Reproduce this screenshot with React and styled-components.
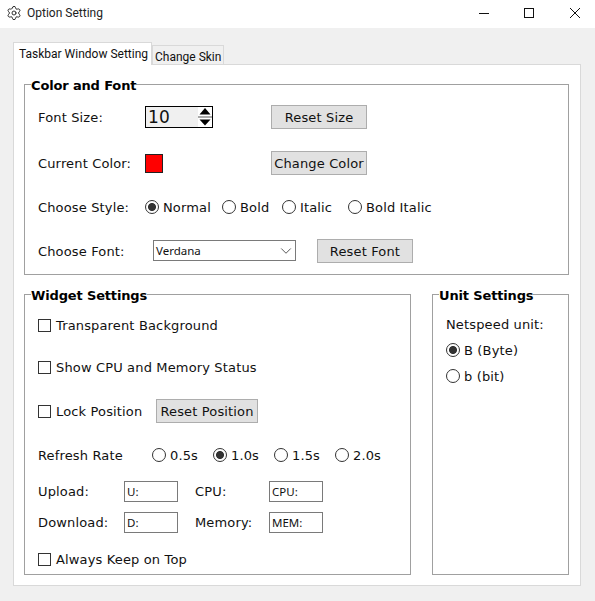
import React from "react";
import styled, { createGlobalStyle } from "styled-components";
import { Settings, ChevronDown } from "lucide-react";

const GlobalStyle = createGlobalStyle`
  html, body {
    margin: 0;
    padding: 0;
    background: #f0f0f0;
  }
  * {
    box-sizing: border-box;
  }
`;

export default function App() {
  return (
    <>
      <GlobalStyle />
      <Window>
        <TitleBar>
          <Settings size={16} strokeWidth={1.4} color="#222" />
          <TitleText>Option Setting</TitleText>
          <WindowControls>
            <svg width="10" height="10" viewBox="0 0 10 10">
              <path d="M0 5.5H10" stroke="#111" strokeWidth="1" />
            </svg>
            <svg width="10" height="10" viewBox="0 0 10 10">
              <rect x="0.5" y="0.5" width="9" height="9" fill="none" stroke="#111" />
            </svg>
            <svg width="10" height="10" viewBox="0 0 10 10">
              <path d="M0 0L10 10M10 0L0 10" stroke="#111" strokeWidth="1" />
            </svg>
          </WindowControls>
        </TitleBar>
        <Content>
          <Tabs>
            <Tab $active>Taskbar Window Setting</Tab>
            <Tab>Change Skin</Tab>
          </Tabs>
          <Pane>
            <Frame>
              <Legend>Color and Font</Legend>
              <Row $top={13}>
                <Label $w={107}>Font Size:</Label>
                <Spinner>
                  <SpinValue>10</SpinValue>
                  <SpinArrows>
                    <svg width="14" height="20" viewBox="0 0 14 20">
                      <path d="M7 1L12.5 7.5H1.5Z" fill="#000" />
                      <rect x="0" y="9.5" width="14" height="1" fill="#555" />
                      <path d="M7 18.5L12.5 12.5H1.5Z" fill="#000" />
                    </svg>
                  </SpinArrows>
                </Spinner>
                <Button $w={96} $left={58}>Reset Size</Button>
              </Row>
              <Row $top={22}>
                <Label $w={107}>Current Color:</Label>
                <Swatch />
                <Button $w={96} $left={108}>Change Color</Button>
              </Row>
              <Row $top={20}>
                <Label $w={107}>Choose Style:</Label>
                <Choice $w={77}><Radio name="style" defaultChecked />Normal</Choice>
                <Choice $w={60}><Radio name="style" />Bold</Choice>
                <Choice $w={66}><Radio name="style" />Italic</Choice>
                <Choice><Radio name="style" />Bold Italic</Choice>
              </Row>
              <Row $top={20}>
                <Label $w={115}>Choose Font:</Label>
                <SelectBox>
                  Verdana
                  <ChevronDown size={18} strokeWidth={1} color="#222" />
                </SelectBox>
                <Button $w={96} $left={21}>Reset Font</Button>
              </Row>
            </Frame>
            <BottomRow>
              <Frame $w={387} $h={289}>
                <Legend>Widget Settings</Legend>
                <Row $top={11}>
                  <Choice><Check />Transparent Background</Choice>
                </Row>
                <Row $top={18}>
                  <Choice><Check />Show CPU and Memory Status</Choice>
                </Row>
                <Row $top={20}>
                  <Choice $w={118}><Check />Lock Position</Choice>
                  <Button $w={102}>Reset Position</Button>
                </Row>
                <Row $top={20}>
                  <Label $w={114}>Refresh Rate</Label>
                  <Choice $w={61}><Radio name="rate" />0.5s</Choice>
                  <Choice $w={61}><Radio name="rate" defaultChecked />1.0s</Choice>
                  <Choice $w={61}><Radio name="rate" />1.5s</Choice>
                  <Choice><Radio name="rate" />2.0s</Choice>
                </Row>
                <Row $top={12}>
                  <Label $w={86}>Upload:</Label>
                  <TextBox defaultValue="U:" />
                  <Label $w={74} $left={17}>CPU:</Label>
                  <TextBox defaultValue="CPU:" />
                </Row>
                <Row $top={7}>
                  <Label $w={86}>Download:</Label>
                  <TextBox defaultValue="D:" />
                  <Label $w={74} $left={17}>Memory:</Label>
                  <TextBox defaultValue="MEM:" />
                </Row>
                <Row $top={13}>
                  <Choice><Check />Always Keep on Top</Choice>
                </Row>
              </Frame>
              <Frame $w={137} $h={289}>
                <Legend>Unit Settings</Legend>
                <Row $top={12} $h={20}>
                  <Label>Netspeed unit:</Label>
                </Row>
                <Row $top={6} $h={20}>
                  <Choice><Radio name="unit" defaultChecked />B (Byte)</Choice>
                </Row>
                <Row $top={6} $h={20}>
                  <Choice><Radio name="unit" />b (bit)</Choice>
                </Row>
              </Frame>
            </BottomRow>
          </Pane>
        </Content>
      </Window>
    </>
  );
}

const Window = styled.div`
  width: 595px;
  height: 601px;
  overflow: hidden;
  background: #f0f0f0;
  font-family: "DejaVu Sans", Verdana, sans-serif;
  font-size: 13px;
  letter-spacing: 0.15px;
  color: #111;
`;

const TitleBar = styled.div`
  height: 28px;
  background: #fff;
  display: flex;
  align-items: center;
  padding: 0 15px 3px 6px;
`;

const TitleText = styled.span`
  margin-left: 5px;
  font-family: Roboto, "Noto Sans", sans-serif;
  font-size: 12px;
  letter-spacing: 0;
  color: #222;
`;

const WindowControls = styled.div`
  margin-left: auto;
  display: flex;
  gap: 35px;
  align-items: center;

  svg:last-child {
    margin-left: 1px;
  }
`;

const Content = styled.div`
  padding: 15px 14px 0 13px;
`;

const Tabs = styled.div`
  display: flex;
  align-items: flex-end;
  height: 22px;
  position: relative;
  z-index: 1;
  margin-bottom: -1px;
`;

const Tab = styled.div`
  height: ${(p) => (p.$active ? "23px" : "20px")};
  width: ${(p) => (p.$active ? "139px" : "72px")};
  padding: ${(p) => (p.$active ? "0 0 1px 5px" : "3px 0 0 2px")};
  display: flex;
  align-items: center;
  background: ${(p) => (p.$active ? "#fff" : "#f0f0f0")};
  border: 1px solid #d9d9d9;
  border-bottom: ${(p) => (p.$active ? "none" : "1px solid #d9d9d9")};
  font-family: Roboto, "Noto Sans", sans-serif;
  font-size: 12px;
  letter-spacing: 0;
  white-space: nowrap;
`;

const Pane = styled.div`
  width: 568px;
  height: 522px;
  background: #fff;
  border: 1px solid #d9d9d9;
  padding: 11px 11px 0 10px;
`;

const Frame = styled.fieldset`
  margin: 0;
  padding: 0 12px 0 13px;
  min-width: 0;
  width: ${(p) => (p.$w ? `${p.$w}px` : "545px")};
  height: ${(p) => (p.$h ? `${p.$h}px` : "199px")};
  border: 1px solid #a0a0a0;
`;

const Legend = styled.legend`
  position: relative;
  top: 2px;
  margin-left: -7px;
  padding: 0;
  font-weight: 700;
  line-height: 16px;
  letter-spacing: -0.15px;
  color: #000;
`;

const BottomRow = styled.div`
  display: flex;
  gap: 21px;
  margin-top: 11px;
`;

const Row = styled.div`
  display: flex;
  align-items: center;
  height: ${(p) => p.$h || 24}px;
  margin-top: ${(p) => p.$top || 0}px;
`;

const Label = styled.span`
  flex: none;
  width: ${(p) => (p.$w ? `${p.$w}px` : "auto")};
  margin-left: ${(p) => p.$left || 0}px;
  white-space: nowrap;
`;

const Choice = styled.label`
  flex: none;
  width: ${(p) => (p.$w ? `${p.$w}px` : "auto")};
  display: flex;
  align-items: center;
  gap: 4px;
  white-space: nowrap;
`;

const Button = styled.button`
  flex: none;
  width: ${(p) => p.$w}px;
  height: 24px;
  margin-left: ${(p) => p.$left || 0}px;
  padding: 0;
  background: #e1e1e1;
  border: 1px solid #adadad;
  border-radius: 0;
  font: inherit;
  letter-spacing: inherit;
  color: #111;
`;

const Spinner = styled.div`
  flex: none;
  width: 68px;
  height: 22px;
  display: flex;
  align-items: center;
  justify-content: space-between;
  background: #f0f0f0;
  border: 1px solid #000;
`;

const SpinValue = styled.span`
  padding-left: 2px;
  font-size: 17px;
  color: #111;
`;

const SpinArrows = styled.div`
  width: 14px;
  height: 20px;
  background: #fff;
  display: flex;
`;

const Swatch = styled.div`
  flex: none;
  width: 18px;
  height: 19px;
  background: #f00;
  border: 1px solid #222;
`;

const SelectBox = styled.div`
  flex: none;
  width: 143px;
  height: 21px;
  margin-bottom: 1px;
  display: flex;
  align-items: center;
  justify-content: space-between;
  padding: 0 0 0 2px;
  border: 1px solid #7a7a7a;
  font-family: "Noto Sans", "Open Sans", sans-serif;
  font-size: 11.5px;
  letter-spacing: 0;
`;

const TextBox = styled.input`
  flex: none;
  width: 54px;
  height: 21px;
  padding: 0 2px;
  background: #fff;
  border: 1px solid #7a7a7a;
  border-radius: 0;
  outline: none;
  font-family: "Noto Sans", "Open Sans", sans-serif;
  font-size: 11.5px;
  letter-spacing: 0;
  color: #111;
`;

const Radio = styled.input.attrs({ type: "radio" })`
  appearance: none;
  flex: none;
  width: 14px;
  height: 14px;
  margin: 0;
  border: 1px solid #333;
  border-radius: 50%;
  background: #fff;
  &:checked {
    background: radial-gradient(circle, #333 0 3.6px, #fff 4.4px);
  }
`;

const Check = styled.input.attrs({ type: "checkbox" })`
  appearance: none;
  flex: none;
  width: 13px;
  height: 13px;
  margin: 0 1px 0 0;
  border: 1px solid #333;
  background: #fff;
`;
